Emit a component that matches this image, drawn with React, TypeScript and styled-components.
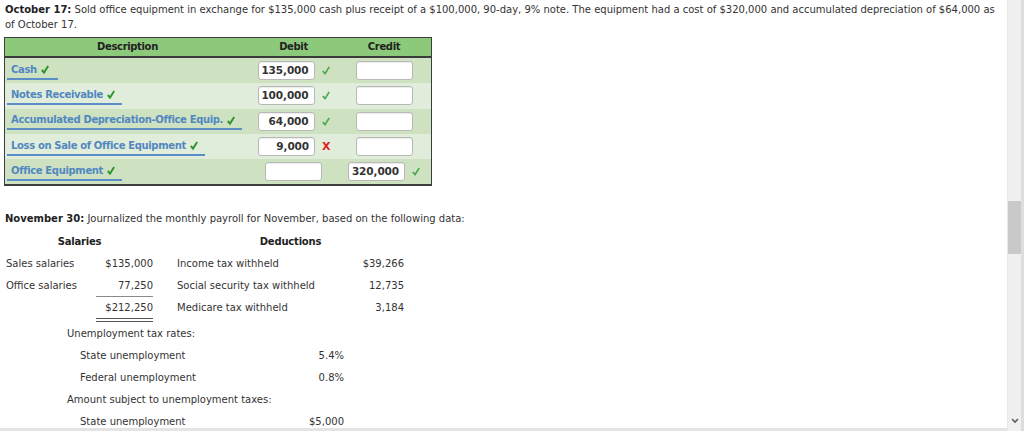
import styled, { createGlobalStyle } from "styled-components";

const GlobalStyle = createGlobalStyle`
  html, body {
    margin: 0;
    padding: 0;
    background: #fff;
  }
  body {
    font-family: "DejaVu Sans", Verdana, sans-serif;
    font-size: 10px;
    color: #333;
  }
`;

const Page = styled.div`
  display: flex;
  height: 431px;
  overflow: hidden;
`;

const Main = styled.div`
  flex: 1;
  padding: 0 5px;
  border-bottom: 3px solid #e4e4e4;
  overflow: hidden;
`;

const Intro = styled.p`
  margin: 0;
  padding-top: 2px;
  line-height: 15px;
`;

const Strong = styled.b`
  font-weight: bold;
  color: #222;
`;

const Journal = styled.div`
  width: 426px;
  margin: 5px 0 0 -1px;
  border: 1px solid #3d3d3d;
  border-bottom-width: 2px;
`;

const HeadRow = styled.div`
  display: grid;
  grid-template-columns: 245px 87px 1fr;
  height: 18px;
  background: #8dc97b;
  border-bottom: 2px solid #3a3a3a;
  font-weight: bold;
  letter-spacing: -0.35px;
  color: #222;
  line-height: 18px;
  text-align: center;
`;

const Row = styled.div<{ $dark: boolean }>`
  display: grid;
  grid-template-columns: 245px 87px 1fr;
  align-items: center;
  height: 25.3px;
  background: ${(p) => (p.$dark ? "#cee2c2" : "#e1eddb")};
`;

const Account = styled.span`
  display: inline-flex;
  align-items: center;
  gap: 4px;
  justify-self: start;
  min-width: 40px;
  margin-left: 2px;
  padding: 1px 7px 1px 4px;
  border-bottom: 2px solid #5b8ec6;
  color: #5187c0;
  font-weight: bold;
  letter-spacing: -0.35px;
  white-space: nowrap;
  line-height: 14px;
`;

const Cell = styled.div`
  display: flex;
  align-items: center;
  justify-content: center;
  gap: 7px;
`;

const Amount = styled.div`
  box-sizing: border-box;
  width: 57px;
  height: 19px;
  padding-right: 5px;
  background: #fff;
  border: 1px solid #b8b8b8;
  border-radius: 3px;
  box-shadow: inset 0 1px 1px rgba(0, 0, 0, 0.08);
  text-align: right;
  font-size: 10.5px;
  font-weight: bold;
  letter-spacing: -0.1px;
  line-height: 17px;
  color: #333;
`;

const Wrong = styled.span`
  width: 7px;
  color: #e3211c;
  font-weight: bold;
  font-size: 11px;
`;

const Payroll = styled.div`
  margin-top: 22px;
`;

const Line = styled.div`
  line-height: 22px;
`;

const Salaries = styled.div`
  display: grid;
  grid-template-columns: 90px 57px 24px 163px 64px;
  grid-template-rows: 22px 22px 22px 25px;
  margin: 1px 0 0 1px;
  line-height: 22px;
  align-items: start;
`;

const ColHead = styled.div<{ $col: string }>`
  grid-column: ${(p) => p.$col};
  text-align: center;
  font-weight: bold;
  letter-spacing: -0.2px;
  color: #222;
`;

const Num = styled.div<{ $rule?: "single" | "double" }>`
  text-align: right;
  height: ${(p) => (p.$rule === "double" ? "25px" : "22px")};
  box-shadow: ${(p) =>
    p.$rule === "single"
      ? "inset 0 -1px #8a8a8a"
      : p.$rule === "double"
      ? "inset 0 -1px #555, inset 0 -3px #fff, inset 0 -4px #555"
      : "none"};
`;

const Label = styled.div<{ $col?: number }>`
  grid-column: ${(p) => p.$col ?? "auto"};
`;

const Rates = styled.div`
  display: grid;
  grid-template-columns: 13px 200px 64px;
  grid-auto-rows: 22px;
  line-height: 22px;
  margin: 1px 0 0 62px;
`;

const RateHead = styled.div`
  grid-column: 1 / 4;
`;

const Scrollbar = styled.div`
  width: 13px;
  display: flex;
  flex-direction: column;
  background: #f0f0f0;
  border-left: 1px solid #e8e8e8;
  border-right: 3px solid #dedede;
`;

const Track = styled.div`
  flex: 1;
  padding-top: 201px;
`;

const Thumb = styled.div`
  height: 53px;
  background: #c9c9c9;
`;

const Arrow = styled.div`
  height: 20px;
  display: flex;
  justify-content: center;
  align-items: center;
`;

function Check({ light }: { light?: boolean }) {
  return (
    <svg width="8" height="9" viewBox="0 0 8 9">
      <path
        d="M0.8 5 L3 7.6 L7.2 1"
        fill="none"
        stroke={light ? "#49a94b" : "#2f962f"}
        strokeWidth={light ? 1.6 : 2}
      />
    </svg>
  );
}

const entries = [
  { account: "Cash", debit: "135,000", credit: "", mark: "ok" },
  { account: "Notes Receivable", debit: "100,000", credit: "", mark: "ok" },
  { account: "Accumulated Depreciation-Office Equip.", debit: "64,000", credit: "", mark: "ok" },
  { account: "Loss on Sale of Office Equipment", debit: "9,000", credit: "", mark: "bad" },
  { account: "Office Equipment", debit: "", credit: "320,000", mark: "ok" },
];

function App() {
  return (
    <Page>
      <GlobalStyle />
      <Main>
        <Intro>
          <Strong>October 17:</Strong> Sold office equipment in exchange for $135,000 cash plus
          receipt of a $100,000, 90-day, 9% note. The equipment had a cost of $320,000 and
          accumulated depreciation of $64,000 as of October 17.
        </Intro>

        <Journal>
          <HeadRow>
            <div>Description</div>
            <div>Debit</div>
            <div>Credit</div>
          </HeadRow>
          {entries.map((e, i) => (
            <Row key={e.account} $dark={i % 2 === 0}>
              <Account>
                {e.account} <Check />
              </Account>
              <Cell>
                <Amount>{e.debit}</Amount>
                {e.debit &&
                  (e.mark === "bad" ? <Wrong>X</Wrong> : <Check light />)}
              </Cell>
              <Cell>
                <Amount>{e.credit}</Amount>
                {e.credit && <Check light />}
              </Cell>
            </Row>
          ))}
        </Journal>

        <Payroll>
          <Line>
            <Strong>November 30:</Strong> Journalized the monthly payroll for November, based on the
            following data:
          </Line>
          <Salaries>
            <ColHead $col="1 / 3">Salaries</ColHead>
            <ColHead $col="4 / 6">Deductions</ColHead>

            <Label>Sales salaries</Label>
            <Num>$135,000</Num>
            <Label $col={4}>Income tax withheld</Label>
            <Num>$39,266</Num>

            <Label>Office salaries</Label>
            <Num $rule="single">77,250</Num>
            <Label $col={4}>Social security tax withheld</Label>
            <Num>12,735</Num>

            <Label />
            <Num $rule="double">$212,250</Num>
            <Label $col={4}>Medicare tax withheld</Label>
            <Num>3,184</Num>
          </Salaries>

          <Rates>
            <RateHead>Unemployment tax rates:</RateHead>
            <Label $col={2}>State unemployment</Label>
            <Num>5.4%</Num>
            <Label $col={2}>Federal unemployment</Label>
            <Num>0.8%</Num>
            <RateHead>Amount subject to unemployment taxes:</RateHead>
            <Label $col={2}>State unemployment</Label>
            <Num>$5,000</Num>
          </Rates>
        </Payroll>
      </Main>

      <Scrollbar>
        <Track>
          <Thumb />
        </Track>
        <Arrow>
          <svg width="8" height="6" viewBox="0 0 8 6">
            <path d="M1 1 L4 4 L7 1" fill="none" stroke="#606060" strokeWidth="1.6" />
          </svg>
        </Arrow>
      </Scrollbar>
    </Page>
  );
}

export default App;
